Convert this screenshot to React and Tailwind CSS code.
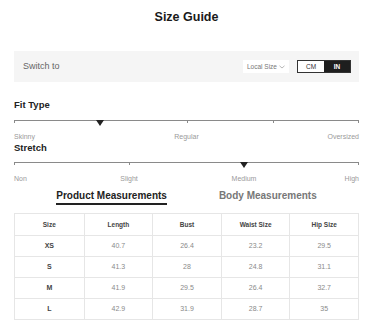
import React from "react";

const rows = [
  ["XS", "40.7", "26.4", "23.2", "29.5"],
  ["S", "41.3", "28", "24.8", "31.1"],
  ["M", "41.9", "29.5", "26.4", "32.7"],
  ["L", "42.9", "31.9", "28.7", "35"],
];

function Scale({ ticks, marker, labels }) {
  return (
    <div>
      <div className="relative h-[8px]">
        <div className="absolute left-0 right-0 top-0 h-px bg-[#8a8a8a]" />
        {ticks.map((t) => (
          <div
            key={t}
            className="absolute top-0 w-px h-[3px] bg-[#8a8a8a]"
            style={{ left: `calc(${t}% - ${t === 100 ? 1 : 0}px)` }}
          />
        ))}
        <div
          className="absolute top-0 w-0 h-0 border-l-[4px] border-r-[4px] border-t-[6px] border-l-transparent border-r-transparent border-t-[#222]"
          style={{ left: `calc(${marker}% - 4px)` }}
        />
      </div>
      <div className="relative h-[11px] mt-[3px] text-[7px] leading-[11px] text-[#9a9a9a]">
        {labels.map(([text, pos]) => (
          <span
            key={text}
            className="absolute top-0 whitespace-nowrap"
            style={
              pos === 0
                ? { left: 0 }
                : pos === 100
                ? { right: 0 }
                : { left: `${pos}%`, transform: "translateX(-50%)" }
            }
          >
            {text}
          </span>
        ))}
      </div>
    </div>
  );
}

export default function App() {
  return (
    <div className="w-[373px] h-[320px] bg-white overflow-hidden" style={{ fontFamily: '"Liberation Sans", Arial, sans-serif' }}>
      <div className="pt-[10px] h-[24px] text-center text-[12.5px] leading-[14px] font-bold text-[#1a1a1a]">
        Size Guide
      </div>

      <div className="mt-[27px] mx-[14px] h-[31px] bg-[#f5f5f5] flex items-center pl-[9px] pr-[8px]">
        <span className="text-[9px] text-[#666]">Switch to</span>
        <div className="ml-auto flex items-center">
          <div className="w-[46px] h-[13px] bg-white flex items-center justify-center text-[6.5px] text-[#777]">
            Local Size
            <svg width="6" height="4" viewBox="0 0 6 4" className="ml-[2px]">
              <path d="M0.5 0.8 L3 3 L5.5 0.8" fill="none" stroke="#999" strokeWidth="0.7" />
            </svg>
          </div>
          <div className="ml-[8px] flex h-[13px] border border-[#333]">
            <div className="w-[26px] bg-white flex items-center justify-center text-[6.5px] text-[#333]">CM</div>
            <div className="w-[26px] bg-[#1e1e1e] flex items-center justify-center text-[6.5px] font-bold text-white">IN</div>
          </div>
        </div>
      </div>

      <div className="mx-[14px]">
        <div className="mt-[17px] text-[9.5px] leading-[12px] font-bold text-[#222]">Fit Type</div>
        <div className="mt-[9px]">
          <Scale
            ticks={[0, 50, 75, 100]}
            marker={25}
            labels={[["Skinny", 0], ["Regular", 50], ["Oversized", 100]]}
          />
        </div>
        <div className="mt-[0px] text-[9.5px] leading-[12px] font-bold text-[#222]">Stretch</div>
        <div className="mt-[8px]">
          <Scale
            ticks={[0, 33.33, 66.67, 100]}
            marker={66.67}
            labels={[["Non", 0], ["Slight", 33.33], ["Medium", 66.67], ["High", 100]]}
          />
        </div>
      </div>

      <div className="mt-[5px] flex justify-center gap-[52px] text-[10px] font-bold leading-[13px]">
        <div className="text-[#222] border-b-[2px] border-[#222] pb-[1px]">Product Measurements</div>
        <div className="text-[#777]">Body Measurements</div>
      </div>

      <div className="mt-[8px] mx-[14px] border border-[#e6e6e6]">
        <div className="grid grid-cols-5 h-[21px] text-[6.5px] font-bold text-[#444]">
          {["Size", "Length", "Bust", "Waist Size", "Hip Size"].map((h, i) => (
            <div key={h} className={`flex items-center justify-center ${i > 0 ? "border-l border-[#e6e6e6]" : ""}`}>
              {h}
            </div>
          ))}
        </div>
        {rows.map((r) => (
          <div key={r[0]} className="grid grid-cols-5 h-[21px] border-t border-[#e6e6e6] text-[7px]">
            {r.map((v, i) => (
              <div
                key={i}
                className={`flex items-center justify-center ${i > 0 ? "border-l border-[#e6e6e6] text-[#8a8a8a]" : "font-bold text-[#444]"}`}
              >
                {v}
              </div>
            ))}
          </div>
        ))}
      </div>
    </div>
  );
}
